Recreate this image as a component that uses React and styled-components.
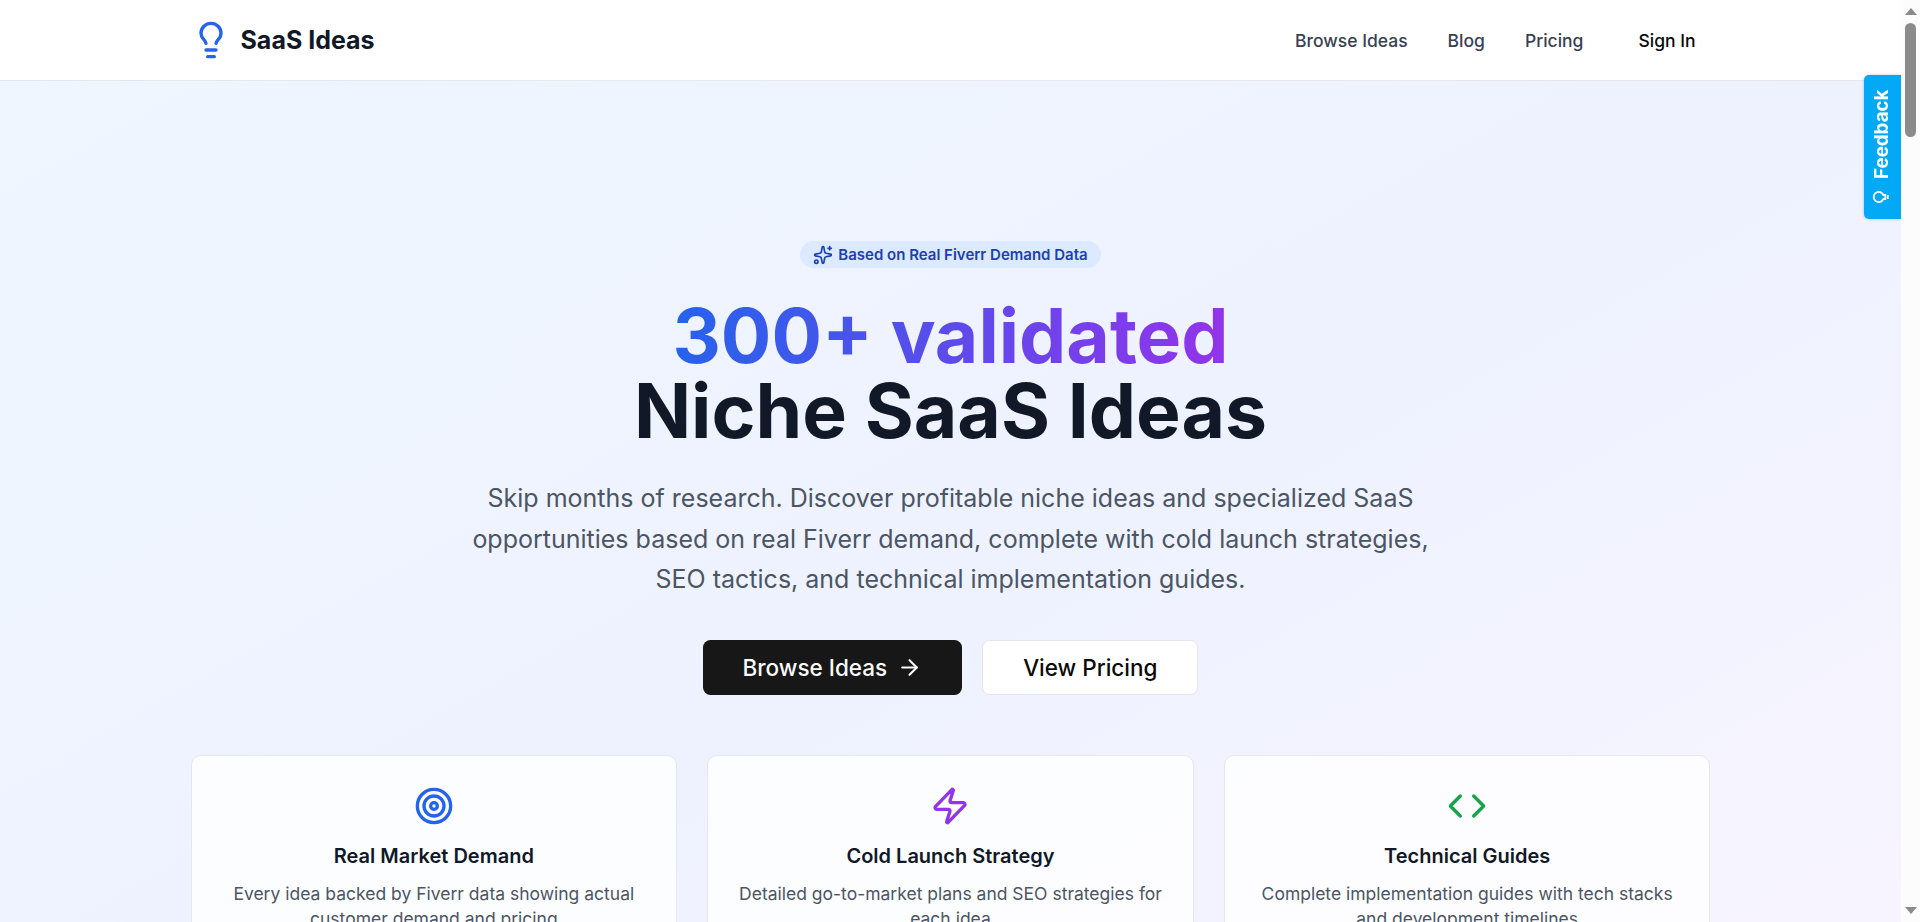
import React from 'react';
import styled, { createGlobalStyle } from 'styled-components'
import { Lightbulb, Sparkles, ArrowRight, Target, Zap, Code } from 'lucide-react'

const GlobalStyle = createGlobalStyle`
  * {
    box-sizing: border-box;
  }
  body {
    margin: 0;
    overflow: hidden;
    font-family: Inter, sans-serif;
    color: #0a0a0a;
    background: #fff;
  }
  h1, h3, p {
    margin: 0;
  }
  svg {
    display: block;
    flex-shrink: 0;
  }
`

const Screen = styled.div`
  display: flex;
  height: 922px;
  overflow: hidden;
`

const Page = styled.div`
  position: relative;
  flex: 1;
  min-width: 0;
  overflow: hidden;
`

const Container = styled.div`
  width: 1520px;
  margin: 0 auto;
`

const Header = styled.header`
  background: #fff;
  border-bottom: 1px solid #e5e7eb;
`

const HeaderInner = styled(Container)`
  display: flex;
  align-items: center;
  justify-content: space-between;
  height: 80px;
`

const Logo = styled.div`
  display: flex;
  align-items: center;
  gap: 10px;
  font-size: 25px;
  line-height: 35px;
  font-weight: 700;
  color: #111827;
  svg {
    color: #2563eb;
  }
`

const Nav = styled.nav`
  display: flex;
  align-items: center;
  gap: 40px;
`

const NavLink = styled.a`
  font-size: 17.5px;
  line-height: 25px;
  font-weight: 500;
  color: #374151;
`

const SignIn = styled.button`
  border: none;
  background: none;
  padding: 0 15px;
  font: 500 17.5px/25px Inter, sans-serif;
  color: #0a0a0a;
`

const Hero = styled.section`
  height: 1065px;
  padding-top: 160px;
  background: linear-gradient(to bottom right, #eff6ff, #eef2ff, #faf5ff);
`

const HeroInner = styled(Container)`
  display: flex;
  flex-direction: column;
  align-items: center;
  text-align: center;
`

const Badge = styled.div`
  display: flex;
  align-items: center;
  gap: 5px;
  height: 27px;
  padding: 0 13.75px;
  border-radius: 14px;
  background: #dbeafe;
  color: #1e40af;
  font-size: 15px;
  font-weight: 600;
`

const Title = styled.h1`
  margin-top: 30px;
  font-size: 75px;
  line-height: 75px;
  font-weight: 700;
  color: #111827;
`

const Highlight = styled.span`
  display: block;
  width: fit-content;
  margin: 0 auto;
  background: linear-gradient(to right, #2563eb, #9333ea);
  background-clip: text;
  -webkit-background-clip: text;
  color: transparent;
`

const Lead = styled.p`
  width: 960px;
  margin-top: 30px;
  font-size: 25px;
  line-height: 40.6px;
  color: #4b5563;
`

const Actions = styled.div`
  display: flex;
  gap: 20px;
  margin-top: 40px;
`

const Button = styled.button`
  display: flex;
  align-items: center;
  gap: 10px;
  height: 55px;
  padding: 0 40px;
  border: ${props => props.$primary ? 'none' : '1px solid #e5e5e5'};
  border-radius: 7.5px;
  background: ${props => props.$primary ? '#171717' : '#fff'};
  color: ${props => props.$primary ? '#fafafa' : '#0a0a0a'};
  font: 500 22.5px/35px Inter, sans-serif;
`

const Cards = styled.div`
  display: grid;
  grid-template-columns: repeat(3, 1fr);
  gap: 30px;
  width: 100%;
  margin-top: 60px;
`

const Card = styled.div`
  display: flex;
  flex-direction: column;
  align-items: center;
  padding: 30px;
  border: 1px solid #e5e7eb;
  border-radius: 10px;
  background: rgba(255, 255, 255, 0.8);
  > svg {
    color: ${props => props.$color};
  }
`

const CardTitle = styled.h3`
  margin-top: 15px;
  font-size: 20px;
  line-height: 30px;
  font-weight: 600;
  color: #111827;
`

const CardText = styled.p`
  margin-top: 10px;
  font-size: 17.5px;
  line-height: 25px;
  color: #4b5563;
`

const FeedbackTab = styled.div`
  position: absolute;
  top: 75px;
  right: 0;
  display: flex;
  align-items: center;
  justify-content: center;
  gap: 8px;
  width: 37px;
  height: 144px;
  padding: 0 0 2px 2px;
  border-radius: 0 5px 5px 0;
  background: #03a9f4;
  box-shadow: 0 0 3px rgba(0, 0, 0, 0.25);
  color: #fff;
  font-size: 18.75px;
  font-weight: 700;
  writing-mode: vertical-rl;
  transform: rotate(180deg);
  svg {
    transform: rotate(90deg);
  }
`

const Scrollbar = styled.div`
  display: flex;
  flex-direction: column;
  align-items: center;
  width: 19px;
  padding: 8px 0;
  background: #fcfcfc;
`

const Thumb = styled.div`
  width: 11px;
  height: 114px;
  margin: 8px 0 auto;
  border-radius: 6px;
  background: #8b8b8b;
`

const Arrow = styled.div`
  width: 0;
  height: 0;
  border-left: 6.5px solid transparent;
  border-right: 6.5px solid transparent;
  border-${props => props.$up ? 'bottom' : 'top'}: 7px solid #8b8b8b;
`

const BulbIcon = () => (
    <svg width="20" height="20" viewBox="0 0 20 20" fill="none" stroke="currentColor" strokeWidth="1.8">
        <path d="M8 13.8V12.4C6.2 11.5 4.9 10 4.9 7.8a5.1 5.1 0 0 1 10.2 0c0 2.2-1.3 3.7-3.1 4.6v1.4" />
        <path d="M7 14.3h6M8 16.8h4" />
    </svg>
)

const features = [
    { icon: Target, color: '#2563eb', title: 'Real Market Demand', text: 'Every idea backed by Fiverr data showing actual customer demand and pricing' },
    { icon: Zap, color: '#9333ea', title: 'Cold Launch Strategy', text: 'Detailed go-to-market plans and SEO strategies for each idea' },
    { icon: Code, color: '#16a34a', title: 'Technical Guides', text: 'Complete implementation guides with tech stacks and development timelines' },
]

function App() {
    return (
        <Screen>
            <GlobalStyle />
            <Page>
                <Header>
                    <HeaderInner>
                        <Logo><Lightbulb size={40} />SaaS Ideas</Logo>
                        <Nav>
                            <NavLink>Browse Ideas</NavLink>
                            <NavLink>Blog</NavLink>
                            <NavLink>Pricing</NavLink>
                            <SignIn>Sign In</SignIn>
                        </Nav>
                    </HeaderInner>
                </Header>
                <Hero>
                    <HeroInner>
                        <Badge><Sparkles size={20} />Based on Real Fiverr Demand Data</Badge>
                        <Title>
                            <Highlight>300+ validated</Highlight>
                            Niche SaaS Ideas
                        </Title>
                        <Lead>
                            Skip months of research. Discover profitable niche ideas and specialized SaaS
                            opportunities based on real Fiverr demand, complete with cold launch strategies,
                            SEO tactics, and technical implementation guides.
                        </Lead>
                        <Actions>
                            <Button $primary>Browse Ideas<ArrowRight size={25} /></Button>
                            <Button>View Pricing</Button>
                        </Actions>
                        <Cards>
                            {features.map(({ icon: Icon, color, title, text }) => (
                                <Card key={title} $color={color}>
                                    <Icon size={40} />
                                    <CardTitle>{title}</CardTitle>
                                    <CardText>{text}</CardText>
                                </Card>
                            ))}
                        </Cards>
                    </HeroInner>
                </Hero>
                <FeedbackTab><BulbIcon />Feedback</FeedbackTab>
            </Page>
            <Scrollbar>
                <Arrow $up />
                <Thumb />
                <Arrow />
            </Scrollbar>
        </Screen>
    )
}

export default App;
